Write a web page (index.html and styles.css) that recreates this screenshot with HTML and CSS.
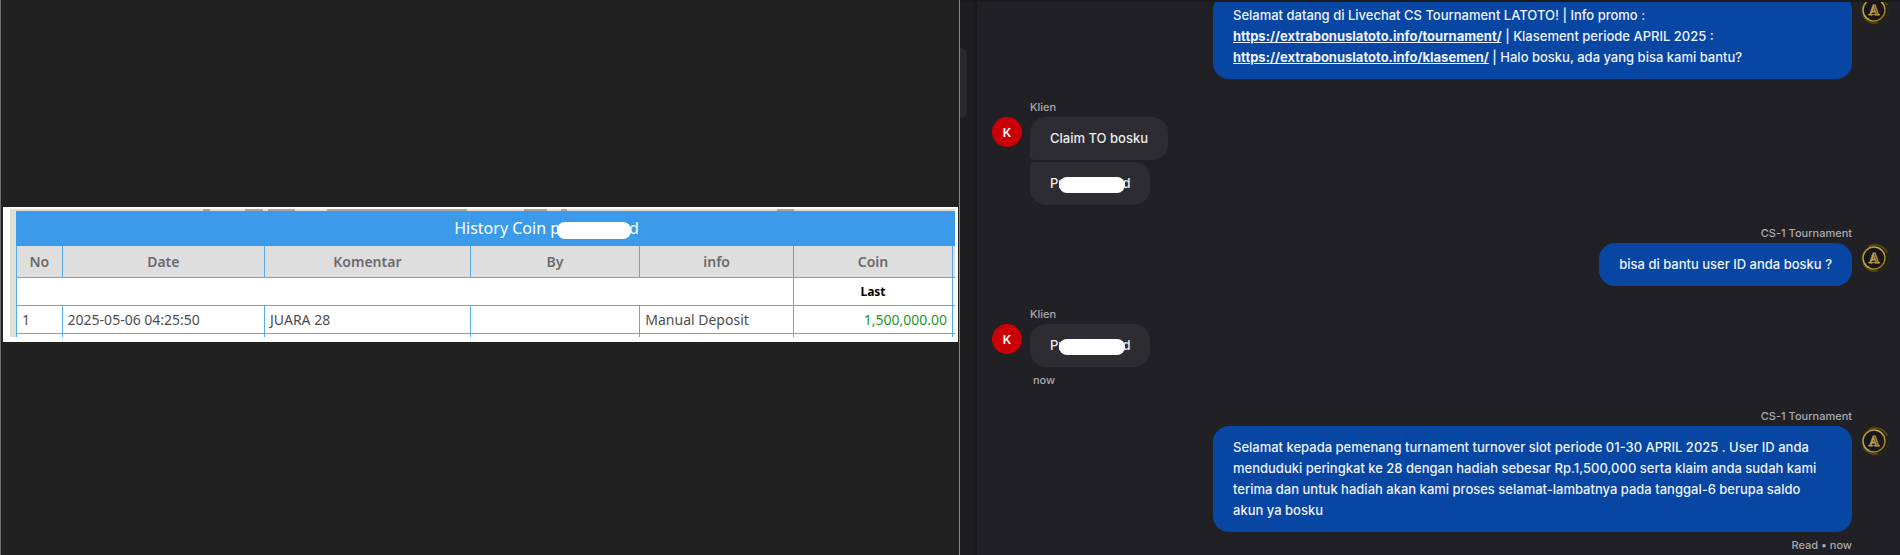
FILE: index.html
```
<!DOCTYPE html>
<html lang="id">
<head>
<meta charset="utf-8">
<meta name="viewport" content="width=device-width, initial-scale=1">
<title>Livechat CS Tournament</title>
<link rel="stylesheet" href="styles.css">
</head>
<body>
<svg class="defs" aria-hidden="true">
  <defs>
    <radialGradient id="coin"><stop offset="0.7" stop-color="#141416"/><stop offset="0.9" stop-color="#2b2713"/><stop offset="1" stop-color="#212024"/></radialGradient>
    <linearGradient id="gold" x1="0" y1="0" x2="1" y2="1"><stop offset="0" stop-color="#a98f2b"/><stop offset="0.5" stop-color="#cfae45"/><stop offset="1" stop-color="#7c6413"/></linearGradient>
    <symbol id="emblem" viewBox="0 0 30 30">
      <circle cx="15" cy="15" r="15" fill="url(#coin)"/>
      <path d="M9 3.5A13 13 0 0 1 27 10M3.5 21A13 13 0 0 0 18 27.5" fill="none" stroke="#75651c" stroke-width="2" opacity="0.5"/>
      <circle cx="14" cy="15" r="11" fill="#17171a" stroke="url(#gold)" stroke-width="1.5"/>
      <path d="M8 19.5H20" stroke="#8a7439"/>
      <text x="14" y="20" text-anchor="middle" class="emblem-letter">A</text>
    </symbol>
  </defs>
</svg>
<main class="split">
  <section class="viewer">
    <div class="sheet">
      <div class="sheet-clip">
        <table class="history">
          <colgroup><col class="c-no"><col class="c-date"><col class="c-note"><col class="c-by"><col class="c-info"><col class="c-coin"><col></colgroup>
          <thead>
            <tr class="title"><th colspan="7">History Coin p<span class="redact redact-title"></span>d</th></tr>
            <tr class="heads"><th>No</th><th>Date</th><th>Komentar</th><th>By</th><th>info</th><th>Coin</th><th></th></tr>
          </thead>
          <tbody>
            <tr class="row"><td colspan="5"></td><td class="last">Last</td><td></td></tr>
            <tr class="row"><td>1</td><td>2025-05-06 04:25:50</td><td>JUARA 28</td><td></td><td>Manual Deposit</td><td class="amount">1,500,000.00</td><td></td></tr>
            <tr class="stub"><td></td><td></td><td></td><td></td><td></td><td></td><td></td></tr>
          </tbody>
        </table>
      </div>
    </div>
  </section>
  <section class="chat">
    <div class="rail"><div class="thumb"></div></div>
    <div class="messages">
      <article class="message agent">
        <div class="stack">
          <p class="bubble">Selamat datang di Livechat CS Tournament LATOTO! | Info promo :<br><a href="https://extrabonuslatoto.info/tournament/">https://extrabonuslatoto.info/tournament/</a> | Klasement periode APRIL 2025 :<br><a href="https://extrabonuslatoto.info/klasemen/">https://extrabonuslatoto.info/klasemen/</a> | Halo bosku, ada yang bisa kami bantu?</p>
        </div>
        <svg class="avatar"><use href="#emblem"/></svg>
      </article>
      <article class="message client">
        <div class="avatar initial">K</div>
        <div class="stack">
          <div class="name">Klien</div>
          <p class="bubble joined-top">Claim TO bosku</p>
          <p class="bubble joined-bottom">Pr<span class="redact"></span>d</p>
        </div>
      </article>
      <article class="message agent">
        <div class="stack">
          <div class="name">CS-1 Tournament</div>
          <p class="bubble">bisa di bantu user ID anda bosku ?</p>
        </div>
        <svg class="avatar"><use href="#emblem"/></svg>
      </article>
      <article class="message client">
        <div class="avatar initial">K</div>
        <div class="stack">
          <div class="name">Klien</div>
          <p class="bubble">Pr<span class="redact"></span>d</p>
          <div class="status">now</div>
        </div>
      </article>
      <article class="message agent">
        <div class="stack">
          <div class="name">CS-1 Tournament</div>
          <p class="bubble">Selamat kepada pemenang turnament turnover slot periode 01-30 APRIL 2025 . User ID anda menduduki peringkat ke 28 dengan hadiah sebesar Rp.1,500,000 serta klaim anda sudah kami terima dan untuk hadiah akan kami proses selamat-lambatnya pada tanggal-6 berupa saldo akun ya bosku</p>
          <div class="status">Read • now</div>
        </div>
        <svg class="avatar"><use href="#emblem"/></svg>
      </article>
    </div>
  </section>
</main>
</body>
</html>
```
FILE: styles.css
```
* { box-sizing: border-box; }
body { margin: 0; background: #212121; font-family: Inter, "Liberation Sans", sans-serif; }
p { margin: 0; }
.defs { position: absolute; width: 0; height: 0; }
.emblem-letter { font: bold 14px "Liberation Serif", serif; fill: #5c4e2a; stroke: #b99b4a; stroke-width: 1; }

.split { display: grid; grid-template: 100% / 96fr 94fr; height: 100vh; overflow: hidden; }

/* History viewer */
.viewer {
  display: flex; align-items: center; min-width: 0;
  padding: 0 0 6px 2px;
  border-left: 1px solid #6e6e6e; border-right: 1px solid #858585;
  background: #212121;
}
.sheet { flex: 1; min-width: 0; margin-right: 1px; padding: 2px 3px 5px 7px; background: #fff; }
.sheet-clip {
  overflow: hidden; padding: 2px 0 0 6px;
  background:
    linear-gradient(90deg, transparent 193px, #a5a5a3 193px 200px, transparent 200px 235px, #a5a5a3 235px 253px, transparent 253px 258px, #a5a5a3 258px 285px, transparent 285px 317px, #a5a5a3 317px 457px, transparent 457px 514px, #a5a5a3 514px 537px, transparent 537px 551px, #a5a5a3 551px 557px, transparent 557px 767px, #a5a5a3 767px 784px, transparent 784px) 0 0 / 100% 2px no-repeat,
    #e0e0da;
}
.history {
  width: 113%; table-layout: fixed; border-collapse: collapse;
  background: #fff; color: #4e4e4e;
  font: 14px/20px "Noto Sans", "Open Sans", sans-serif;
}
.c-no { width: 4.3%; }
.c-date { width: 19.1%; }
.c-note { width: 19.4%; }
.c-by { width: 16%; }
.c-info { width: 14.5%; }
.c-coin { width: 15%; }
.history th, .history td { padding: 0 5px; border: 1px solid #55abee; white-space: nowrap; }
.history .title th { height: 34px; background: #3b9ae9; border-color: #3b9ae9; color: #fff; font-size: 16px; font-weight: 400; }
.history .heads th { height: 32px; background: #dedede; color: #6b6b6b; font-weight: 600; }
.row td { height: 28px; }
.row .last { color: #000; font-size: 12px; font-weight: 700; text-align: center; }
.row .amount { color: #2a962a; text-align: right; }
.history .stub td { height: 3px; border-bottom: 0; }

.redact {
  display: inline-block; position: relative; vertical-align: -5px;
  width: 66px; height: 16px; margin: 0 -3px 0 -4px;
  border-radius: 8px; background: #fff;
}
.redact-title { width: 74px; height: 17px; margin: 0 -2px 0 -3px; }

/* Conversation */
.chat { display: flex; min-width: 0; border-top: 2px solid #1a1a1d; background: #212024; }
.rail { flex: 0 0 17px; padding-top: 46px; border-right: 2px solid #19191c; background: #1d1d1f; }
.thumb { width: 7px; height: 70px; border-radius: 0 6px 6px 0; background: #2a2a2d; }
.messages {
  flex: 1; min-width: 0; display: flex; flex-direction: column; justify-content: flex-end; gap: 20px;
  padding: 0 10px 2px 15px; overflow: hidden;
}
.message { display: flex; align-items: flex-start; gap: 8px; }
.agent { justify-content: flex-end; }
.stack { display: flex; flex-direction: column; align-items: flex-start; gap: 2px; max-width: 639px; }
.agent .stack { align-items: flex-end; }
.name, .status { color: #a9a9b1; font-size: 11px; font-weight: 500; line-height: 16px; }
.status { margin-top: 3px; }
.client .status { padding-left: 3px; }
.bubble {
  padding: 11px 20px; border-radius: 16px;
  background: #2d2c32; color: #ececee;
  font-size: 13px; font-weight: 500; line-height: 21px;
}
.agent .bubble { background: #0846a4; color: #eef2fa; }
.agent .bubble:first-child { width: 639px; }
.joined-top { border-bottom-left-radius: 4px; }
.joined-bottom { border-top-left-radius: 4px; }
.bubble a { color: inherit; font-weight: 700; text-decoration: underline; }
.avatar { flex: 0 0 30px; width: 30px; height: 30px; margin-top: 18px; border-radius: 50%; }
.message:first-child .avatar { margin-top: 1px; }
.initial { display: flex; align-items: center; justify-content: center; background: #cb0007; color: #fff; font-size: 12px; font-weight: 600; }
```
